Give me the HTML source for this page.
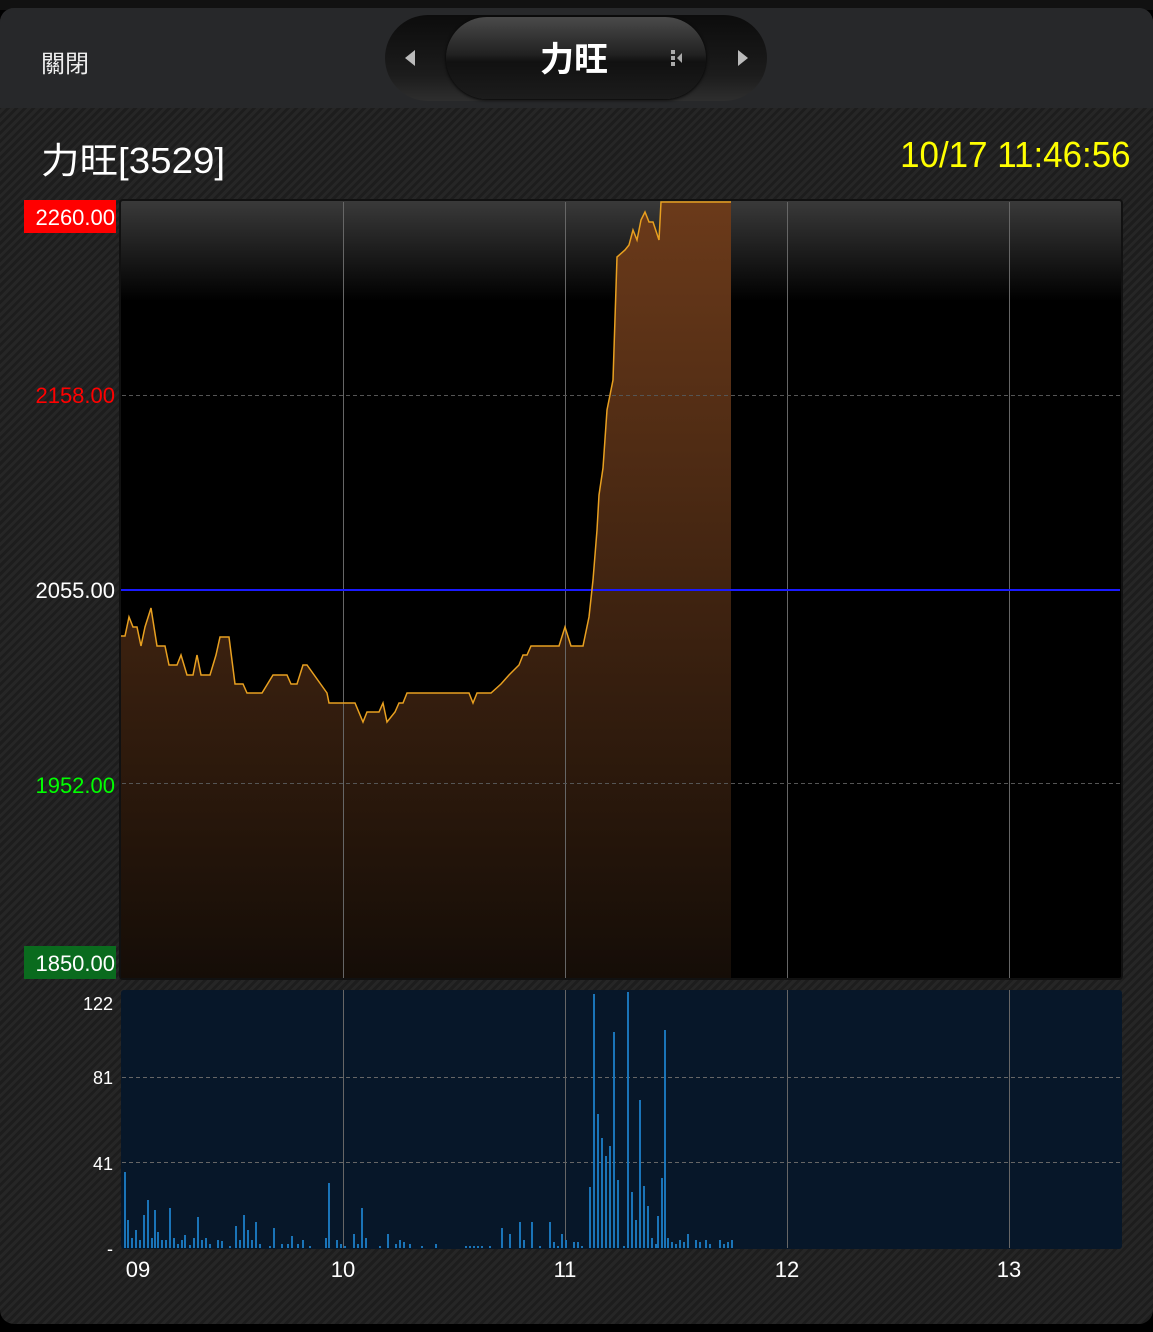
<!DOCTYPE html>
<html><head><meta charset="utf-8"><style>
*{margin:0;padding:0;box-sizing:border-box}
body{width:1153px;height:1332px;background:#000;position:relative;overflow:hidden;font-family:"Liberation Sans","Noto Sans CJK TC",sans-serif;color:#fff}
.top{position:absolute;left:0;top:0;width:1153px;height:10px;background:#111}
.panel{position:absolute;left:0;top:8px;width:1153px;height:1316px;border-radius:14px;overflow:hidden;background:repeating-linear-gradient(135deg,#262626 0 3px,#1d1d1d 3px 6px)}
.hdr{position:absolute;left:0;top:0;width:1153px;height:100px;background:#27282a}
.abs{position:absolute;white-space:nowrap}
.seg{position:absolute;left:385px;top:7px;width:382px;height:86px;border-radius:43px;background:linear-gradient(#0c0c0c,#1c1c1c 70%,#2e2e2e)}
.pill{position:absolute;left:446px;top:9px;width:260px;height:82px;border-radius:41px;background:linear-gradient(#4a4a4a,#222 45%,#111 55%,#1c1c1c);box-shadow:0 1px 3px #000}
</style></head><body>
<div class="top"></div>
<div class="panel">
<div class="hdr">
<div class="abs" style="left:41px;top:36px;font-size:24px;color:#eee">關閉</div>
<div class="seg"></div>
<div class="pill"></div>
<svg class="abs" style="left:400px;top:40px" width="20" height="20"><polygon points="15,2 15,18 5,10" fill="#bbb"/></svg>
<svg class="abs" style="left:733px;top:40px" width="20" height="20"><polygon points="5,2 5,18 15,10" fill="#bbb"/></svg>
<svg class="abs" style="left:668px;top:40px" width="20" height="20"><rect x="3" y="2" width="4" height="4" fill="#aaa"/><rect x="3" y="8" width="4" height="4" fill="#aaa"/><rect x="3" y="14" width="4" height="4" fill="#aaa"/><polygon points="14,5 14,15 9,10" fill="#aaa"/></svg>
<div class="abs" style="left:540px;top:24px;font-size:34px;font-weight:bold">力旺</div>
</div>
<div class="abs" style="left:41px;top:124px;font-size:36px;transform:scaleX(1.07);transform-origin:left">力旺[3529]</div>
<div class="abs" style="right:22px;top:126px;font-size:36px;color:#ff0;transform:scaleX(0.97);transform-origin:right">10/17 11:46:56</div>
</div>
<svg class="abs" style="left:0;top:0" width="1153" height="1332">
<defs>
<linearGradient id="g1" x1="0" y1="0" x2="0" y2="1"><stop offset="0" stop-color="#3a3a3a"/><stop offset="0.13" stop-color="#000"/><stop offset="1" stop-color="#000"/></linearGradient>
<linearGradient id="g2" x1="0" y1="0" x2="0" y2="1"><stop offset="0" stop-color="#6b3a1a"/><stop offset="1" stop-color="#150d07"/></linearGradient>
</defs>
<rect x="120" y="200" width="1002" height="779" fill="url(#g1)" stroke="#111" stroke-width="2" rx="3"/>
<polygon fill="url(#g2)" points="121,978 121,636 125,636 129,617 133,627 137,627 141,646 145,627 151,608 157,646 165,646 169,665 177,665 181,655 187,675 193,675 197,655 201,675 210,675 216,655 220,637 229,637 235,684 243,684 247,693 262,693 273,675 287,675 291,684 297,684 303,665 307,665 327,693 329,703 355,703 363,722 367,712 379,712 383,703 387,722 395,712 399,703 403,703 407,693 469,693 473,703 477,693 491,693 501,684 509,675 519,665 523,655 527,655 531,646 559,646 565,627 571,646 583,646 589,617 593,580 597,530 599,495 603,468 607,410 613,380 617,257 625,250 629,245 633,230 637,240 641,220 645,212 649,222 653,222 659,240 661,202 731,202 731,978"/>
<g stroke="#666" stroke-width="1">
<line x1="343.5" y1="202" x2="343.5" y2="978"/><line x1="565.5" y1="202" x2="565.5" y2="978"/><line x1="787.5" y1="202" x2="787.5" y2="978"/><line x1="1009.5" y1="202" x2="1009.5" y2="978"/>
</g>
<g stroke="#555" stroke-dasharray="4,3"><line x1="122" y1="395.5" x2="1120" y2="395.5"/><line x1="122" y1="783.5" x2="1120" y2="783.5"/></g>
<line x1="121" y1="590" x2="1120" y2="590" stroke="#1a1aff" stroke-width="2"/>
<polyline fill="none" stroke="#e8a020" stroke-width="1.5" points="121,636 125,636 129,617 133,627 137,627 141,646 145,627 151,608 157,646 165,646 169,665 177,665 181,655 187,675 193,675 197,655 201,675 210,675 216,655 220,637 229,637 235,684 243,684 247,693 262,693 273,675 287,675 291,684 297,684 303,665 307,665 327,693 329,703 355,703 363,722 367,712 379,712 383,703 387,722 395,712 399,703 403,703 407,693 469,693 473,703 477,693 491,693 501,684 509,675 519,665 523,655 527,655 531,646 559,646 565,627 571,646 583,646 589,617 593,580 597,530 599,495 603,468 607,410 613,380 617,257 625,250 629,245 633,230 637,240 641,220 645,212 649,222 653,222 659,240 661,202 731,202"/>
<rect x="24" y="200" width="92" height="33" fill="#f00"/>
<rect x="24" y="946" width="92" height="33" fill="#0a6b1e"/>
<g font-size="22" font-family="Liberation Sans,sans-serif" text-anchor="end">
<text x="115" y="225" fill="#fff">2260.00</text>
<text x="115" y="403" fill="#f00">2158.00</text>
<text x="115" y="598" fill="#fff">2055.00</text>
<text x="115" y="793" fill="#0f0">1952.00</text>
<text x="115" y="971" fill="#fff">1850.00</text>
</g>
<rect x="121" y="990" width="1001" height="259" fill="#071729" rx="3"/>
<g stroke="#666"><line x1="343.5" y1="990" x2="343.5" y2="1248"/><line x1="565.5" y1="990" x2="565.5" y2="1248"/><line x1="787.5" y1="990" x2="787.5" y2="1248"/><line x1="1009.5" y1="990" x2="1009.5" y2="1248"/></g>
<g stroke="#666" stroke-dasharray="4,3"><line x1="122" y1="1077.5" x2="1120" y2="1077.5"/><line x1="122" y1="1162.5" x2="1120" y2="1162.5"/></g>
<path stroke="#1a74b8" stroke-width="2" fill="none" d="M125 1248V1172M128 1248V1220M132 1248V1238M136 1248V1230M140 1248V1240M144 1248V1215M148 1248V1200M152 1248V1238M155 1248V1210M158 1248V1232M162 1248V1240M166 1248V1240M170 1248V1208M174 1248V1238M178 1248V1244M182 1248V1240M185 1248V1235M190 1248V1245M194 1248V1238M198 1248V1217M202 1248V1240M206 1248V1238M210 1248V1244M218 1248V1240M222 1248V1241M230 1248V1246M236 1248V1226M240 1248V1240M244 1248V1215M248 1248V1230M252 1248V1240M256 1248V1222M260 1248V1244M270 1248V1246M274 1248V1228M282 1248V1244M288 1248V1244M292 1248V1236M298 1248V1244M303 1248V1240M310 1248V1246M326 1248V1238M329 1248V1183M337 1248V1240M341 1248V1244M345 1248V1246M354 1248V1234M358 1248V1244M362 1248V1208M366 1248V1238M380 1248V1246M388 1248V1234M396 1248V1244M400 1248V1240M404 1248V1242M410 1248V1244M422 1248V1246M436 1248V1244M466 1248V1246M470 1248V1246M474 1248V1246M478 1248V1246M482 1248V1246M490 1248V1246M502 1248V1228M510 1248V1234M520 1248V1222M524 1248V1240M532 1248V1222M540 1248V1246M550 1248V1222M554 1248V1242M558 1248V1246M562 1248V1234M566 1248V1240M574 1248V1242M578 1248V1242M582 1248V1246M590 1248V1187M594 1248V994M598 1248V1114M602 1248V1138M606 1248V1156M610 1248V1146M614 1248V1032M618 1248V1180M624 1248V1246M628 1248V992M632 1248V1192M636 1248V1220M640 1248V1100M644 1248V1186M648 1248V1206M652 1248V1238M656 1248V1244M658 1248V1216M662 1248V1178M665 1248V1030M668 1248V1238M672 1248V1242M676 1248V1244M680 1248V1240M684 1248V1242M688 1248V1234M696 1248V1240M700 1248V1242M706 1248V1240M710 1248V1244M720 1248V1240M724 1248V1244M728 1248V1242M732 1248V1240"/>
<g font-size="18" font-family="Liberation Sans,sans-serif" fill="#fff" text-anchor="end">
<text x="113" y="1010">122</text><text x="113" y="1084">81</text><text x="113" y="1170">41</text><text x="113" y="1255">-</text>
</g>
<g font-size="22" font-family="Liberation Sans,sans-serif" fill="#fff" text-anchor="middle">
<text x="138" y="1277">09</text><text x="343" y="1277">10</text><text x="565" y="1277">11</text><text x="787" y="1277">12</text><text x="1009" y="1277">13</text>
</g>
</svg>
</body></html>
